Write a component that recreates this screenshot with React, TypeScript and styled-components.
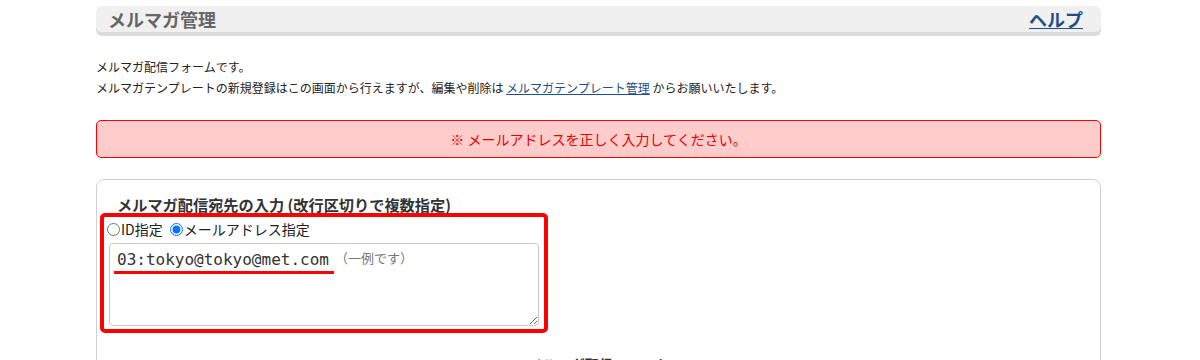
import React from 'react';
import styled, { createGlobalStyle } from 'styled-components';

const GlobalStyle = createGlobalStyle`
  body {
    margin: 0;
    background: #fff;
    font-family: 'Noto Sans CJK JP', 'Noto Sans', sans-serif;
    color: #222;
  }
`;

const Page = styled.div`
  width: 1005px;
  margin: 0 0 0 96px;
  padding-top: 6px;
`;

const TitleBar = styled.div`
  height: 26px;
  display: flex;
  align-items: center;
  justify-content: space-between;
  padding: 0 18px 0 12px;
  background: #f0f0f0;
  border-radius: 6px;
  box-shadow: 0 4px 0 #dcdcdc;
`;

const Title = styled.h1`
  margin: 0;
  font-size: 18px;
  font-weight: bold;
  color: #666;
  line-height: 26px;
`;

const HelpLink = styled.a`
  font-size: 18px;
  font-weight: bold;
  color: #1f4f88;
  text-decoration: underline;
  line-height: 26px;
`;

const Intro = styled.div`
  margin-top: 24px;
  font-size: 12px;
  line-height: 21px;
`;

const TextLink = styled.a`
  color: #1f4f88;
  text-decoration: underline;
`;

const ErrorBox = styled.div`
  margin-top: 22px;
  height: 36px;
  display: flex;
  align-items: center;
  justify-content: center;
  background: #ffcccc;
  border: 1px solid #ff0000;
  border-radius: 5px;
  color: #e60000;
  font-size: 14px;
`;

const FormBox = styled.div`
  margin-top: 21px;
  border: 1px solid #d0d0d0;
  border-radius: 8px;
  padding-top: 14px;
  padding-bottom: 20px;
`;

const FieldLabel = styled.h2`
  margin: 0 0 -1px 20px;
  font-size: 15.2px;
  line-height: 20px;
  font-weight: bold;
  color: #333;
`;

const Highlight = styled.div`
  width: 440px;
  margin-left: 3px;
  border: 4px solid #ff0000;
  border-radius: 5px;
  padding: 0 0 3px;
`;

const RadioRow = styled.div`
  display: flex;
  align-items: center;
  height: 24px;
  font-size: 14px;
  color: #222;
`;

const RadioLabel = styled.label`
  display: flex;
  align-items: center;
  margin-right: 4px;
`;

const Radio = styled.input`
  width: 13px;
  height: 13px;
  margin: 0 1px 0 3px;
`;

const AreaWrap = styled.div`
  position: relative;
  margin: 2px 5px 0;
`;

const Area = styled.textarea`
  display: block;
  box-sizing: border-box;
  width: 430px;
  height: 83px;
  border: 1px solid #c8c8c8;
  border-radius: 4px;
  padding: 4px 7px;
  font-family: 'DejaVu Sans Mono', 'Liberation Mono', monospace;
  font-size: 16px;
  line-height: 24px;
  color: #333;
  resize: both;
`;

const Note = styled.span`
  position: absolute;
  left: 226px;
  top: 5px;
  font-size: 13px;
  color: #777;
  pointer-events: none;
`;

const Underline = styled.div`
  position: absolute;
  left: 5px;
  top: 28px;
  width: 220px;
  height: 3px;
  background: #ff0000;
`;

const SectionTitle = styled.h3`
  margin: 21px 0 0;
  text-align: center;
  font-size: 14px;
  line-height: 20px;
  font-weight: bold;
  color: #333;
`;

export default function App() {
  return (
    <>
      <GlobalStyle />
      <Page>
        <TitleBar>
          <Title>メルマガ管理</Title>
          <HelpLink href='#'>ヘルプ</HelpLink>
        </TitleBar>

        <Intro>
          <div>メルマガ配信フォームです。</div>
          <div>
            メルマガテンプレートの新規登録はこの画面から行えますが、編集や削除は{' '}
            <TextLink href='#'>メルマガテンプレート管理</TextLink> からお願いいたします。
          </div>
        </Intro>

        <ErrorBox>※ メールアドレスを正しく入力してください。</ErrorBox>

        <FormBox>
          <FieldLabel>メルマガ配信宛先の入力 (改行区切りで複数指定)</FieldLabel>
          <Highlight>
            <RadioRow>
              <RadioLabel>
                <Radio type='radio' name='target' />
                ID指定
              </RadioLabel>
              <RadioLabel>
                <Radio type='radio' name='target' defaultChecked />
                メールアドレス指定
              </RadioLabel>
            </RadioRow>
            <AreaWrap>
              <Area defaultValue='03:tokyo@tokyo@met.com' />
              <Underline />
              <Note>（一例です）</Note>
            </AreaWrap>
          </Highlight>
          <SectionTitle>メルマガ配信フォーム</SectionTitle>
        </FormBox>
      </Page>
    </>
  );
}
